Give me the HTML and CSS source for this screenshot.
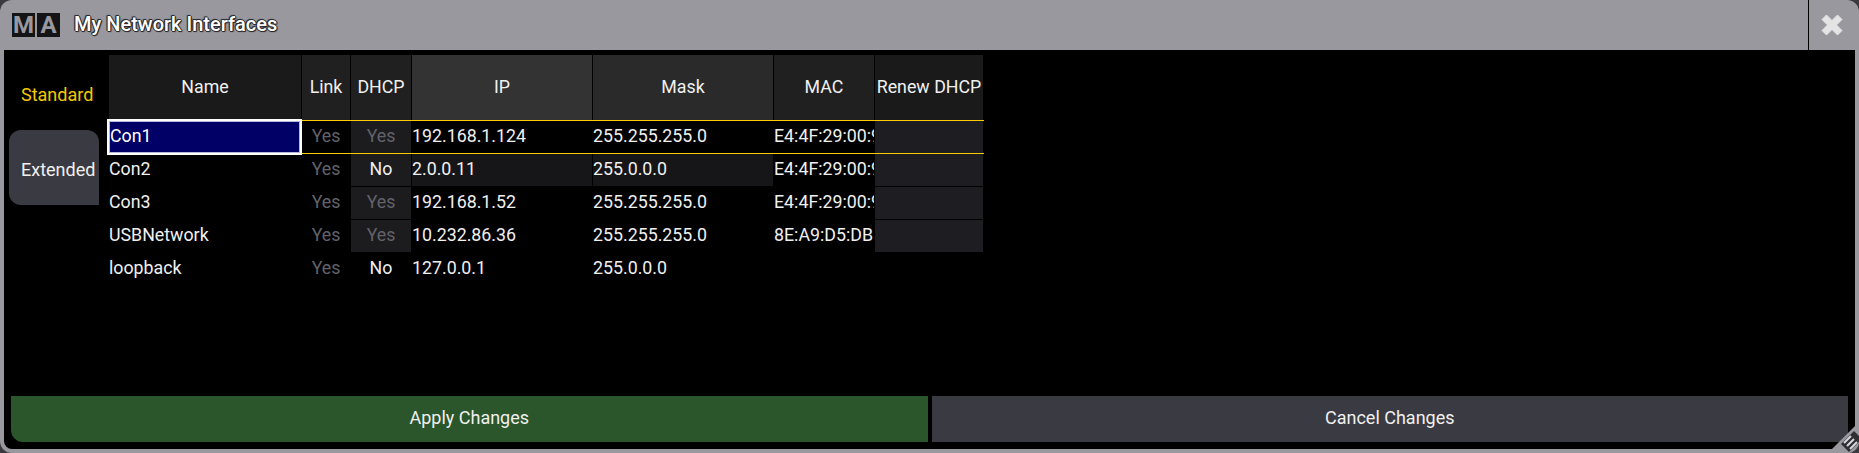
FILE: index.html
```html
<!DOCTYPE html>
<html lang="en">
<head>
<meta charset="utf-8">
<title>My Network Interfaces</title>
<link rel="stylesheet" href="styles.css">
</head>
<body>
<div class="window">
  <header class="titlebar">
    <div class="logo"><span class="logo-box">M</span><span class="logo-box">A</span></div>
    <h1 class="title">My Network Interfaces</h1>
    <button class="close" aria-label="Close">
      <svg width="24" height="24" viewBox="0 0 24 24"><path d="M6.500 2 12 7.500 17.500 2 22 6.500 16.500 12 22 17.500 17.500 22 12 16.500 6.500 22 2 17.500 7.500 12 2 6.500Z" fill="#e4e4e4" stroke="#e4e4e4" stroke-linejoin="round"/></svg>
    </button>
  </header>
  <main class="body">
    <div class="content">
      <nav class="tabs">
        <div class="tab tab-active">Standard</div>
        <div class="tab tab-box">Extended</div>
      </nav>
      <div class="table">
        <div class="row head">
          <div class="cell c-name h-name">Name</div>
          <div class="cell c-link h-dark">Link</div>
          <div class="cell c-dhcp h-dark">DHCP</div>
          <div class="cell c-ip h-ip">IP</div>
          <div class="cell c-mask h-mask">Mask</div>
          <div class="cell c-mac h-dark">MAC</div>
          <div class="cell c-renew h-name">Renew DHCP</div>
        </div>
        <div class="row selected">
          <div class="cell c-name left focus">Con1</div>
          <div class="cell c-link dim">Yes</div>
          <div class="cell c-dhcp dim shade">Yes</div>
          <div class="cell c-ip left">192.168.1.124</div>
          <div class="cell c-mask left">255.255.255.0</div>
          <div class="cell c-mac left">E4:4F:29:00:9</div>
          <div class="cell c-renew renew"></div>
        </div>
        <div class="row">
          <div class="cell c-name left">Con2</div>
          <div class="cell c-link dim">Yes</div>
          <div class="cell c-dhcp shade">No</div>
          <div class="cell c-ip left edit">2.0.0.11</div>
          <div class="cell c-mask left edit">255.0.0.0</div>
          <div class="cell c-mac left">E4:4F:29:00:9</div>
          <div class="cell c-renew renew"></div>
        </div>
        <div class="row">
          <div class="cell c-name left">Con3</div>
          <div class="cell c-link dim">Yes</div>
          <div class="cell c-dhcp dim shade">Yes</div>
          <div class="cell c-ip left">192.168.1.52</div>
          <div class="cell c-mask left">255.255.255.0</div>
          <div class="cell c-mac left">E4:4F:29:00:9</div>
          <div class="cell c-renew renew"></div>
        </div>
        <div class="row">
          <div class="cell c-name left">USBNetwork</div>
          <div class="cell c-link dim">Yes</div>
          <div class="cell c-dhcp dim shade">Yes</div>
          <div class="cell c-ip left">10.232.86.36</div>
          <div class="cell c-mask left">255.255.255.0</div>
          <div class="cell c-mac left">8E:A9:D5:DB</div>
          <div class="cell c-renew renew"></div>
        </div>
        <div class="row">
          <div class="cell c-name left">loopback</div>
          <div class="cell c-link dim">Yes</div>
          <div class="cell c-dhcp">No</div>
          <div class="cell c-ip left">127.0.0.1</div>
          <div class="cell c-mask left">255.0.0.0</div>
          <div class="cell c-mac left"></div>
          <div class="cell c-renew"></div>
        </div>
      </div>
    </div>
    <footer class="actions">
      <button class="action apply">Apply Changes</button>
      <button class="action cancel">Cancel Changes</button>
    </footer>
  </main>
  <svg class="grip" width="31" height="31" viewBox="0 0 31 31">
    <path d="M31 0 0 31H31Z" fill="#98989e"/>
    <path d="M26 9 13 22 21 30 31 20V14Z" fill="#2e2e33"/>
    <path d="M16 21 23 14M19 24 26 17M22 27 29 20" stroke="#d8d8dc" stroke-width="2" fill="none"/>
  </svg>
</div>
</body>
</html>
```

FILE: styles.css
```css
* { box-sizing: border-box; }
html, body { margin: 0; height: 100%; background: #3a3a3e; }
body { font-family: Roboto, "Liberation Sans", sans-serif; color: #f0f0f0; overflow: hidden; }

.window {
  position: relative;
  width: 1859px;
  height: 453px;
  background: #98989e;
  border-radius: 12px;
  overflow: hidden;
  display: flex;
  flex-direction: column;
}

.titlebar { height: 50px; flex: none; display: flex; align-items: center; padding-left: 12px; }
.logo { display: flex; gap: 2px; height: 24px; margin-bottom: 1px; }
.logo-box {
  width: 23px;
  background: #141416;
  color: #98989e;
  font-size: 24px;
  font-weight: 700;
  line-height: 25px;
  text-align: center;
}
.title {
  margin: 0 0 2px 14px;
  font-size: 20px;
  font-weight: 500;
  color: #fff;
  text-shadow: -1px 0 0 #2a2a2e, 1px 0 0 #2a2a2e, 0 -1px 0 #2a2a2e, 0 1px 0 #2a2a2e, -1px -1px 1px #2a2a2e, 1px 1px 1px #2a2a2e;
}
.close {
  margin-left: auto;
  width: 51px;
  height: 50px;
  padding: 0 5px 0 0;
  background: none;
  border: 0;
  border-left: 1px solid #000;
  display: flex;
  align-items: center;
  justify-content: center;
}

.body {
  flex: 1;
  margin: 0 4px 4px;
  background: #000;
  border-radius: 0 0 8px 8px;
  padding: 5px 7px 7px;
  display: flex;
  flex-direction: column;
}
.content { flex: 1; display: flex; }
.tabs { width: 100px; flex: none; margin-left: -2px; display: flex; flex-direction: column; }
.tab { font-size: 18px; display: flex; align-items: center; padding-left: 12px; }
.tab-active { height: 75px; padding-top: 3px; color: #f5c800; }
.tab-box { height: 75px; width: 90px; padding-top: 4px; background: #3a3a43; border-radius: 12px 12px 0 12px; white-space: nowrap; }

.table { display: flex; flex-direction: column; }
.row { display: flex; height: 33px; font-size: 17.8px; position: relative; padding-bottom: 1px; }
.row .cell { padding-bottom: 4px; }
.head { height: 65px; padding-bottom: 0; }
.selected { height: 34px; padding-bottom: 0; border-top: 1px solid #ffcc00; border-bottom: 1px solid #ffcc00; width: 875px; }
.cell {
  display: flex;
  align-items: center;
  justify-content: center;
  white-space: nowrap;
  overflow: hidden;
  margin-right: 1px;
}
.head .cell { padding-bottom: 3px; color: #f0f0f0; }
.c-name { width: 192px; }
.c-link { width: 48px; }
.c-dhcp { width: 60px; }
.c-ip { width: 180px; }
.c-mask { width: 180px; }
.c-mac { width: 100px; }
.c-renew { width: 108px; margin-right: 0; }
.left { justify-content: flex-start; padding-left: 0; }
.h-name { background: #1a1a1a; }
.h-dark { background: #202020; }
.h-ip { background: #333; }
.h-mask { background: #2a2a2a; }
.dim { color: #62626a; }
.shade { background: #1c1c1f; }
.edit { background: #161618; }
.renew { background: #1d1d22; }
.c-name.focus {
  position: relative;
  z-index: 1;
  margin: -2px 0 -2px -2px;
  width: 195px;
  padding-left: 1px;
  background: #000066;
  color: #fff;
  border: 2px solid #fff;
  box-shadow: inset 0 0 0 1px #b8b8d8;
}

.actions { flex: none; display: flex; gap: 4px; height: 46px; }
.action {
  flex: 1;
  border: 0;
  padding: 0 0 4px;
  color: #f0f0f0;
  font: 18px Roboto, "Liberation Sans", sans-serif;
}
.apply { background: #2b552b; border-radius: 0 0 0 12px; }
.cancel { background: #3a3a43; border-radius: 0; }

.grip { position: absolute; right: 0; bottom: 0; }
```
